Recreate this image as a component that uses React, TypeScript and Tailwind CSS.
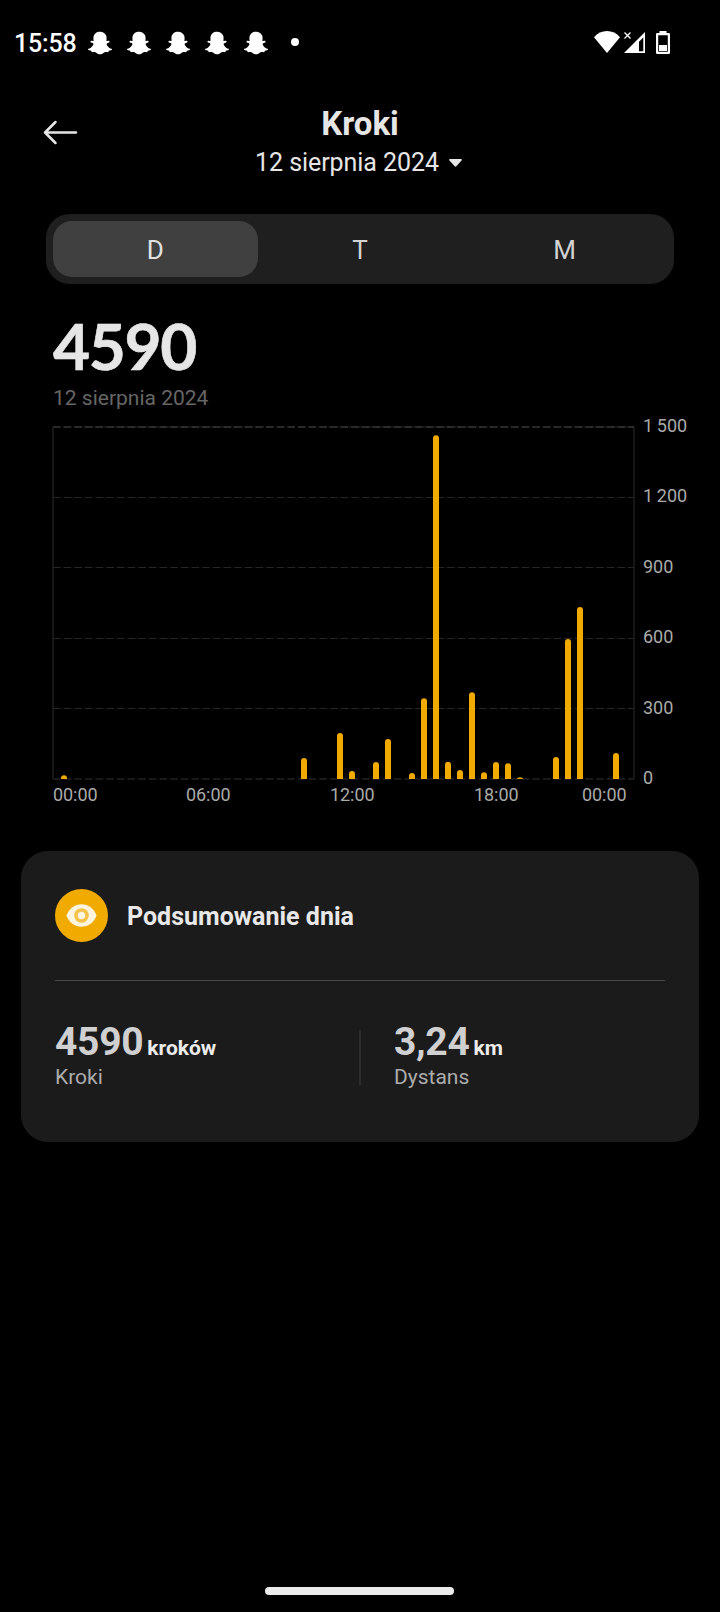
import { FaSnapchatGhost } from "react-icons/fa";

const BASE_Y = 779;

// slot = half hour of the day, top = y of the bar's top edge
const bars = [
  { slot: 0, top: 775.3 },
  { slot: 20, top: 758 },
  { slot: 23, top: 733 },
  { slot: 24, top: 771 },
  { slot: 26, top: 762 },
  { slot: 27, top: 739 },
  { slot: 29, top: 773 },
  { slot: 30, top: 698.3 },
  { slot: 31, top: 435.3 },
  { slot: 32, top: 761.7 },
  { slot: 33, top: 770 },
  { slot: 34, top: 692.3 },
  { slot: 35, top: 772.3 },
  { slot: 36, top: 762 },
  { slot: 37, top: 763.3 },
  { slot: 38, top: 777.3 },
  { slot: 41, top: 757 },
  { slot: 42, top: 639 },
  { slot: 43, top: 607 },
  { slot: 46, top: 753 },
];

const yLabels = [
  { label: "1\u2009500", y: 426 },
  { label: "1\u2009200", y: 496 },
  { label: "900", y: 566.7 },
  { label: "600", y: 637 },
  { label: "300", y: 708 },
  { label: "0", y: 778 },
];

const xLabels = [
  { label: "00:00", x: 75.3 },
  { label: "06:00", x: 208.3 },
  { label: "12:00", x: 352.3 },
  { label: "18:00", x: 496.3 },
  { label: "00:00", x: 604.3 },
];

function barPath(slot: number, top: number) {
  const x = 61 + slot * 12;
  const r = Math.min(3, BASE_Y - top);
  return `M${x} ${BASE_Y}V${top + r}a3 ${r} 0 0 1 6 0V${BASE_Y}Z`;
}

function StatusBar() {
  return (
    <div className="flex h-[86px] items-center pl-[14px] pr-[49px] text-white">
      <span className="w-[74px] pt-[2px] text-[25px] font-medium tracking-[-0.2px]">15:58</span>
      <div className="flex gap-[15px]">
        {[0, 1, 2, 3, 4].map((i) => (
          <FaSnapchatGhost key={i} className="h-6 w-6" />
        ))}
      </div>
      <span className="mb-[2px] ml-[23px] h-2 w-2 rounded-full bg-white" />
      <svg className="ml-auto" width="78" height="26" viewBox="594 29 78 26">
        <path d="M608 52L595 36.2C598.5 32.2 603 30 608 30s9.500 2.200 13 6.200Z" fill="#fff" />
        <path d="M625.500 31.500l6 6m0-6l-6 6" stroke="#fff" strokeWidth="1.300" fill="none" />
        <path fillRule="evenodd" d="M646 31v21h-21ZM644.300 36.500L640 40.800V50.300h4.300Z" fill="#fff" />
        <path fillRule="evenodd" d="M660.500 30h7v2h2.300a1.200 1.200 0 0 1 1.200 1.200v18.600a1.200 1.200 0 0 1-1.200 1.200h-11.600a1.200 1.200 0 0 1-1.200-1.200V33.200a1.200 1.200 0 0 1 1.200-1.200h2.300ZM659.200 34.200v16.600h9.600V34.200Z" fill="#fff" />
        <path d="M660 44h8v6h-8Z" fill="#fff" />
      </svg>
    </div>
  );
}

function Header() {
  return (
    <div className="grid grid-cols-[1fr_auto_1fr] pt-[18px] text-[#e6e6e6]">
      <svg className="ml-[43px] mt-[15px]" width="36" height="26" viewBox="43 119 36 26" fill="none" stroke="currentColor" strokeWidth="2.500">
        <path d="M76 132.500H45.500M55.500 122L45 132.500L55.500 143" strokeLinejoin="round" strokeLinecap="round" />
      </svg>
      <div className="flex flex-col items-center">
        <h1 className="text-[33px] font-bold leading-[40px]">Kroki</h1>
        <button className="mr-[3px] mt-1 flex items-center gap-[10px] text-[25px] leading-[30px] tracking-[-0.07px]">
          12 sierpnia 2024
          <svg width="13" height="8" viewBox="0 0 13 8" fill="currentColor">
            <path d="M1 0h11c.8 0 1.200.900.600 1.500L7.300 7.300c-.5.500-1.100.500-1.600 0L.4 1.500C-.2.900.2 0 1 0Z" />
          </svg>
        </button>
      </div>
    </div>
  );
}

function RangeTabs() {
  return (
    <div className="mx-[46px] mt-[36px] grid h-[70px] grid-cols-3 rounded-[24px] bg-[#1f1f1f] p-[7px] text-[26px] text-[#d2d2d2]">
      <button className="rounded-[19px] bg-[#404040] pt-[2px] text-[#e0e0e0]">D</button>
      <button className="pt-[2px]">T</button>
      <button className="pt-[2px]">M</button>
    </div>
  );
}

function StepsChart() {
  return (
    <svg className="block" width="720" height="400" viewBox="0 411 720 400">
      <g stroke="#262626" fill="none">
        <path d="M53 427V779M634 427V779" stroke="#1e1e1e" strokeWidth="1.500" />
        <path d="M53 427H634" stroke="#2e2e2e" strokeWidth="2" strokeDasharray="7.600 3.050" />
        <path d="M53 427H634" stroke="#242424" strokeWidth="1" strokeDasharray="7 3.200" />
        {[497.5, 567.5, 638.5, 708.5].map((y) => (
          <path key={y} d={`M53 ${y}H634`} strokeWidth="1" strokeDasharray="7.600 3.050" />
        ))}
        <path d="M53 779H634" stroke="#191919" strokeWidth="2" strokeDasharray="7.600 3.050" />
      </g>
      <g fill="#f0aa00">
        {bars.map((b) => (
          <path key={b.slot} d={barPath(b.slot, b.top)} />
        ))}
      </g>
      <g fill="#aaaaaa" fontSize="18">
        {yLabels.map((l) => (
          <text key={l.label} x="643" y={l.y + 6.3}>{l.label}</text>
        ))}
        {xLabels.map((l) => (
          <text key={l.x} x={l.x} y="801" textAnchor="middle">{l.label}</text>
        ))}
      </g>
    </svg>
  );
}

function Stat({ value, unit, label }: { value: string; unit: string; label: string }) {
  return (
    <div>
      <div className="flex items-baseline gap-[4px] leading-[44px]">
        <span className="text-[39px] font-bold tracking-[-0.3px] text-[#d0d0d0]">{value}</span>
        <span className="text-[21px] font-bold text-[#ececec]">{unit}</span>
      </div>
      <div className="-mt-[6px] text-[21px] leading-[26px] text-[#acacac]">{label}</div>
    </div>
  );
}

function SummaryCard() {
  return (
    <div className="ml-[21px] mt-10 h-[291px] w-[678px] rounded-[27px] bg-[#1b1b1b] px-[34px] pt-[38px]">
      <div className="flex items-center gap-[19px]">
        <svg width="53" height="53" viewBox="0 0 53 53">
          <circle cx="26.500" cy="26.500" r="26.500" fill="#f0aa00" />
          <path d="M11.500 26.500C14 19.500 19.700 15.200 26.500 15.200S39 19.500 41.500 26.500C39 33.500 33.300 37.800 26.500 37.800S14 33.500 11.500 26.500Z" fill="#fdf5e0" />
          <circle cx="26.500" cy="26.500" r="7.300" fill="#f5c34a" />
          <circle cx="26.500" cy="26.500" r="3.700" fill="#fdf5e0" />
        </svg>
        <h2 className="pt-[2px] text-[25px] font-bold text-[#e8e8e8]">Podsumowanie dnia</h2>
      </div>
      <div className="mt-[38px] h-px bg-[#484848]" />
      <div className="mt-[39px] grid grid-cols-[304px_35px_1fr]">
        <Stat value="4590" unit="kroków" label="Kroki" />
        <div className="mt-[10px] h-[55px] w-[2px] bg-[#2c2c2c]" />
        <Stat value="3,24" unit="km" label="Dystans" />
      </div>
    </div>
  );
}

export default function App() {
  return (
    <div className="flex h-[1612px] w-[720px] flex-col overflow-hidden bg-black font-['Roboto',sans-serif]">
      <StatusBar />
      <Header />
      <RangeTabs />
      <div className="mt-8 pl-[53px]">
        <div className="font-['Lato',sans-serif] text-[64px] font-bold leading-[60px] tracking-[-1.4px] text-[#e6e6e6] [-webkit-text-stroke:0.6px_#e6e6e6]">4590</div>
        <div className="mt-[9px] text-[21px] leading-[26px] text-[#666666]">12 sierpnia 2024</div>
      </div>
      <StepsChart />
      <SummaryCard />
      <div className="mb-[17px] ml-[265px] mt-auto h-2 w-[189px] rounded-full bg-[#ebebeb]" />
    </div>
  );
}
